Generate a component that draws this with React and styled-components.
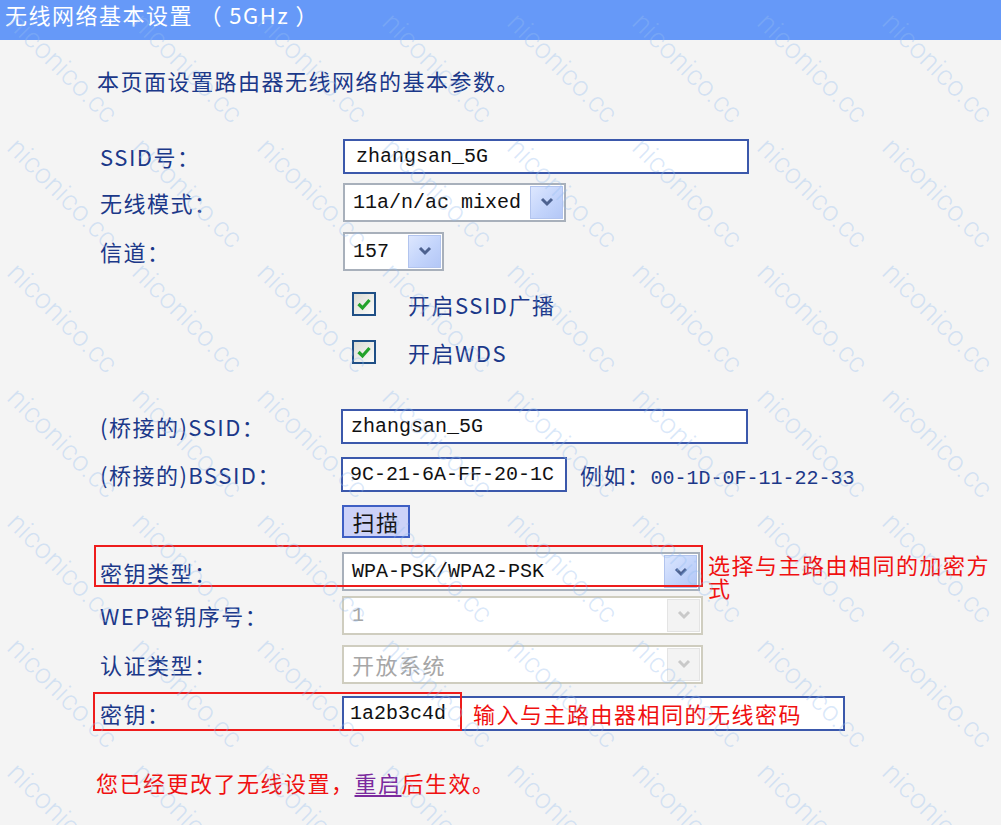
import React from 'react';
import styled, { createGlobalStyle } from 'styled-components';

const GlobalStyle = createGlobalStyle`
  html, body {
    margin: 0;
    padding: 0;
    background: #f4f4f4;
  }
`

const cjk = `"Noto Sans CJK SC", "Noto Sans", sans-serif`
const mono = `"Liberation Mono", "DejaVu Sans Mono", monospace`

const Page = styled.div`
  position: relative;
  width: 1001px;
  height: 825px;
  overflow: hidden;
  background: #f4f4f4;
  font-family: ${cjk};
  font-size: 22px;
  letter-spacing: 1.5px;
  color: #1b3889;
`
const Header = styled.div`
  height: 40px;
  box-sizing: border-box;
  padding: 2px 0 0 5px;
  background: #6699f8;
  color: #fff;
  line-height: 24px;
`
const Body = styled.div`
  padding: 28px 0 0 97px;
`
const Intro = styled.p`
  margin: 0;
  line-height: 24px;
`
const Form = styled.div`
  margin-top: 41px;
  padding-left: 3px;
  display: flex;
  flex-direction: column;
`
const Row = styled.div`
  position: relative;
  display: grid;
  grid-template-columns: 242px 1fr;
  align-items: center;
  height: ${p => p.$h}px;
  margin-top: ${p => p.$mt || 0}px;
`
const Label = styled.div`
  line-height: 24px;
  white-space: nowrap;
`
const Cell = styled.div`
  display: flex;
  align-items: center;
  margin-left: ${p => p.$ml || 0}px;
`
const TextBox = styled.div`
  box-sizing: border-box;
  width: ${p => p.$w}px;
  height: 35px;
  border: 2px solid #3b58ab;
  background: #fff;
  padding-left: ${p => p.$pl || 8}px;
  display: flex;
  align-items: center;
  font-family: ${mono};
  font-size: 20px;
  letter-spacing: 0;
  color: #111;
`
const SelectBox = styled.div`
  box-sizing: border-box;
  width: ${p => p.$w}px;
  height: 39px;
  border: 2px solid ${p => (p.$disabled ? '#cfcdbf' : '#a8b0bb')};
  background: #fff;
  display: flex;
  align-items: stretch;
  padding: 1px;
`
const SelectValue = styled.div`
  flex: 1;
  display: flex;
  align-items: center;
  padding-left: 7px;
  font-family: ${p => (p.$cjk ? cjk : mono)};
  font-size: ${p => (p.$cjk ? 22 : 20)}px;
  letter-spacing: ${p => (p.$cjk ? 1.5 : 0)}px;
  color: ${p => (p.$disabled ? '#a6a6a6' : '#111')};
  white-space: nowrap;
`
const DropButton = styled.div`
  width: 31px;
  display: flex;
  align-items: center;
  justify-content: center;
  border: 1px solid ${p => (p.$disabled ? '#e4e4e4' : '#b2c4ee')};
  background: ${p =>
    p.$disabled
      ? '#f3f3f3'
      : 'linear-gradient(135deg, #dde7fe 0%, #c3d4fb 55%, #b3c7f6 100%)'};
`
const CheckRow = styled.div`
  display: flex;
  align-items: center;
  gap: 32px;
  padding-left: 10px;
`
const CheckBox = styled.div`
  box-sizing: border-box;
  width: 24px;
  height: 24px;
  border: 2px solid #1f4f86;
  background: linear-gradient(135deg, #dcdcd4, #fbfbfa);
  display: flex;
  align-items: center;
  justify-content: center;
`
const Example = styled.span`
  margin-left: 13px;
  white-space: nowrap;
`
const ExampleValue = styled.span`
  font-family: ${mono};
  font-size: 20px;
  letter-spacing: 0;
`
const ScanButton = styled.div`
  box-sizing: border-box;
  width: 68px;
  height: 33px;
  border: 2px solid #3f5fc4;
  background: #cdd2f8;
  color: #151515;
  display: flex;
  align-items: center;
  justify-content: center;
  line-height: 24px;
`
const RedFrame = styled.div`
  position: absolute;
  left: ${p => p.$x}px;
  top: ${p => p.$y}px;
  width: ${p => p.$w}px;
  height: ${p => p.$hh}px;
  border: 2px solid #ee1c1c;
  box-sizing: border-box;
  pointer-events: none;
`
const Hint = styled.span`
  color: #f01010;
  line-height: 23px;
  margin-left: ${p => p.$ml || 0}px;
`
const WrapHint = styled(Hint)`
  flex: 1;
  align-self: flex-start;
  margin: 9px 0 0 8px;
`
const KeyField = styled.div`
  box-sizing: border-box;
  width: 503px;
  height: 35px;
  border: 2px solid #3b58ab;
  background: #fff;
  display: flex;
  align-items: center;
`
const KeyValue = styled.span`
  width: 120px;
  padding-left: 6px;
  box-sizing: border-box;
  font-family: ${mono};
  font-size: 20px;
  letter-spacing: 0;
  color: #111;
`
const Notice = styled.p`
  margin: 32px 0 0 -1px;
  line-height: 24px;
  color: #f01010;
`
const Reboot = styled.span`
  color: #7b2a9e;
  text-decoration: underline;
  text-underline-offset: 3px;
`
const Watermarks = styled.div`
  position: absolute;
  inset: 0;
  pointer-events: none;
`
const Mark = styled.span`
  position: absolute;
  font-family: Roboto, "Liberation Sans", sans-serif;
  font-weight: 300;
  font-size: 28px;
  letter-spacing: 0.3px;
  line-height: 1;
  color: rgba(150, 190, 240, 0.36);
  transform: rotate(45deg);
  transform-origin: 0 0;
  white-space: nowrap;
`

const Chevron = ({ disabled }) => (
  <svg width="16" height="12" viewBox="0 0 16 12">
    <path
      d="M3 3 L8 8 L13 3"
      fill="none"
      stroke={disabled ? '#c9c9c9' : '#4d6290'}
      strokeWidth="3"
    />
  </svg>
)

const Tick = () => (
  <svg width="16" height="16" viewBox="0 0 16 16">
    <path d="M2.5 8 L6.5 12 L13.5 4" fill="none" stroke="#22a32a" strokeWidth="3.2" />
  </svg>
)

const Select = ({ w, value, disabled, cjkText }) => (
  <SelectBox $w={w} $disabled={disabled}>
    <SelectValue $disabled={disabled} $cjk={cjkText}>{value}</SelectValue>
    <DropButton $disabled={disabled}>
      <Chevron disabled={disabled} />
    </DropButton>
  </SelectBox>
)

const marks = []
for (let j = -1; j < 7; j++) {
  for (let i = -1; i < 8; i++) {
    marks.push({ x: 22 + 125 * i, y: 8 + 125 * j })
  }
}

const App = () => (
  <Page>
    <GlobalStyle />
    <Header>无线网络基本设置 （ 5GHz ）</Header>
    <Body>
      <Intro>本页面设置路由器无线网络的基本参数。</Intro>
      <Form>
        <Row $h={46}>
          <Label>SSID号：</Label>
          <Cell $ml={1}><TextBox $w={406} $pl={11}>zhangsan_5G</TextBox></Cell>
        </Row>
        <Row $h={46}>
          <Label>无线模式：</Label>
          <Cell $ml={1}><Select w={223} value="11a/n/ac mixed" /></Cell>
        </Row>
        <Row $h={52}>
          <Label>信道：</Label>
          <Cell $ml={1}><Select w={101} value="157" /></Cell>
        </Row>
        <Row $h={54}>
          <Label />
          <CheckRow><CheckBox><Tick /></CheckBox>开启SSID广播</CheckRow>
        </Row>
        <Row $h={42}>
          <Label />
          <CheckRow><CheckBox><Tick /></CheckBox>开启WDS</CheckRow>
        </Row>
        <Row $h={48} $mt={29}>
          <Label>(桥接的)SSID：</Label>
          <Cell $ml={-1}><TextBox $w={407}>zhangsan_5G</TextBox></Cell>
        </Row>
        <Row $h={48}>
          <Label>(桥接的)BSSID：</Label>
          <Cell $ml={-1}>
            <TextBox $w={226} $pl={7}>9C-21-6A-FF-20-1C</TextBox>
            <Example>例如：<ExampleValue>00-1D-0F-11-22-33</ExampleValue></Example>
          </Cell>
        </Row>
        <Row $h={46}>
          <Label />
          <Cell><ScanButton>扫描</ScanButton></Cell>
        </Row>
        <Row $h={46}>
          <Label>密钥类型：</Label>
          <Cell>
            <Select w={358} value="WPA-PSK/WPA2-PSK" />
            <WrapHint>选择与主路由相同的加密方式</WrapHint>
          </Cell>
          <RedFrame $x={-6} $y={1} $w={609} $hh={42} />
        </Row>
        <Row $h={50}>
          <Label>WEP密钥序号：</Label>
          <Cell><Select w={361} value="1" disabled /></Cell>
        </Row>
        <Row $h={48}>
          <Label>认证类型：</Label>
          <Cell><Select w={361} value="开放系统" disabled cjkText /></Cell>
        </Row>
        <Row $h={50}>
          <Label>密钥：</Label>
          <Cell>
            <KeyField>
              <KeyValue>1a2b3c4d</KeyValue>
              <Hint $ml={9}>输入与主路由器相同的无线密码</Hint>
            </KeyField>
          </Cell>
          <RedFrame $x={-7} $y={4} $w={369} $hh={39} />
        </Row>
      </Form>
      <Notice>您已经更改了无线设置，<Reboot>重启</Reboot>后生效。</Notice>
    </Body>
    <Watermarks>
      {marks.map((m, k) => (
        <Mark key={k} style={{ left: m.x, top: m.y }}>niconico.cc</Mark>
      ))}
    </Watermarks>
  </Page>
)

export default App
